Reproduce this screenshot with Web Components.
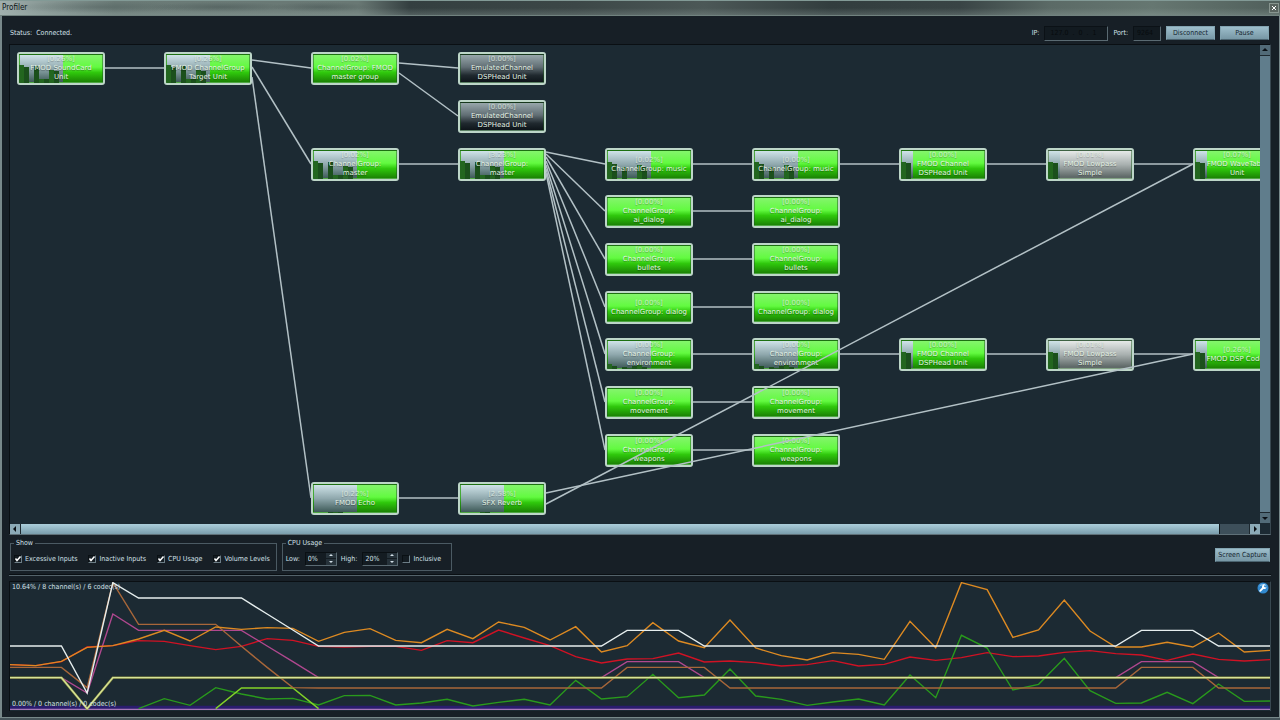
<!DOCTYPE html>
<html lang="en">
<head>
<meta charset="utf-8">
<title>Profiler</title>
<style>
    body {
        margin: 0;
        background: #171f26;
        color: #d3e0e8;
        font: 7px/10px "DejaVu Sans Condensed", "Noto Sans", "Open Sans", sans-serif;
    }
</style>
</head>
<body>
<profiler-window></profiler-window>

<script>
// ---------- data ----------

const COL_STEP = 147;
const NODE_W = 88;

const ROWS = [7, 55, 103, 150, 198, 246, 293, 341, 389, 437];

const FULL = [18, 16, 0, 17, 4, 4, 13, 12];
const MUSIC = [17, 15, 0, 12, 0, 0, 14, 12];
const LOW = [5, 3, 0, 2, 1, 3, 4, 2];
const PAIR = [17, 16];

// col, row, percent, name, kind, level width, meter bars
const NODES = [
    [0, 0, '0.26%', 'FMOD SoundCard<br>Unit', 'active', 43, FULL],
    [1, 0, '0.26%', 'FMOD ChannelGroup<br>Target Unit', 'active', 43, FULL],
    [2, 0, '0.02%', 'ChannelGroup: FMOD<br>master group', 'active', 0, []],
    [3, 0, '0.00%', 'EmulatedChannel<br>DSPHead Unit', 'idle', 0, []],
    [3, 1, '0.00%', 'EmulatedChannel<br>DSPHead Unit', 'idle', 0, []],
    [2, 2, '0.02%', 'ChannelGroup:<br>master', 'active', 43, FULL],
    [3, 2, '3.23%', 'ChannelGroup:<br>master', 'active', 43, FULL],
    [4, 2, '0.02%', 'ChannelGroup: music', 'active', 43, MUSIC],
    [5, 2, '0.00%', 'ChannelGroup: music', 'active', 43, MUSIC],
    [6, 2, '0.00%', 'FMOD Channel<br>DSPHead Unit', 'active', 11, PAIR],
    [7, 2, '0.01%', 'FMOD Lowpass<br>Simple', 'bypass', 11, PAIR],
    [8, 2, '0.07%', 'FMOD WaveTable<br>Unit', 'active', 11, PAIR],
    [4, 3, '0.00%', 'ChannelGroup:<br>ai_dialog', 'active', 0, []],
    [5, 3, '0.00%', 'ChannelGroup:<br>ai_dialog', 'active', 0, []],
    [4, 4, '0.00%', 'ChannelGroup:<br>bullets', 'active', 0, []],
    [5, 4, '0.00%', 'ChannelGroup:<br>bullets', 'active', 0, []],
    [4, 5, '0.00%', 'ChannelGroup: dialog', 'active', 0, []],
    [5, 5, '0.00%', 'ChannelGroup: dialog', 'active', 0, []],
    [4, 6, '0.00%', 'ChannelGroup:<br>environment', 'active', 43, LOW],
    [5, 6, '0.00%', 'ChannelGroup:<br>environment', 'active', 43, LOW],
    [6, 6, '0.00%', 'FMOD Channel<br>DSPHead Unit', 'active', 11, PAIR],
    [7, 6, '0.01%', 'FMOD Lowpass<br>Simple', 'bypass', 11, PAIR],
    [8, 6, '0.26%', 'FMOD DSP Codec', 'active', 11, PAIR],
    [4, 7, '0.00%', 'ChannelGroup:<br>movement', 'active', 0, []],
    [5, 7, '0.00%', 'ChannelGroup:<br>movement', 'active', 0, []],
    [4, 8, '0.00%', 'ChannelGroup:<br>weapons', 'active', 0, []],
    [5, 8, '0.00%', 'ChannelGroup:<br>weapons', 'active', 0, []],
    [2, 9, '0.22%', 'FMOD Echo', 'active', 43, [0, 0, 0, 1, 1, 1]],
    [3, 9, '2.58%', 'SFX Reverb', 'active', 43, [0, 0, 0, 0, 1, 1]]
];

// from col, from row, start offset, to col, to row
const LINKS = [
    [0, 0, 16, 1, 0], [1, 0, 8, 2, 0], [1, 0, 15, 2, 2], [1, 0, 25, 2, 9],
    [2, 0, 11, 3, 0], [2, 0, 21, 3, 1],
    [2, 2, 16, 3, 2],
    [3, 2, 4, 4, 2], [3, 2, 6, 4, 3], [3, 2, 9, 4, 4], [3, 2, 13, 4, 5],
    [3, 2, 17, 4, 6], [3, 2, 21, 4, 7], [3, 2, 25, 4, 8],
    [4, 2, 16, 5, 2], [5, 2, 16, 6, 2], [6, 2, 16, 7, 2], [7, 2, 16, 8, 2],
    [4, 3, 16, 5, 3], [4, 4, 16, 5, 4], [4, 5, 16, 5, 5],
    [4, 6, 16, 5, 6], [5, 6, 16, 6, 6], [6, 6, 16, 7, 6], [7, 6, 16, 8, 6],
    [4, 7, 16, 5, 7], [4, 8, 16, 5, 8],
    [2, 9, 16, 3, 9], [3, 9, 11, 8, 6], [3, 9, 22, 8, 2]
];

const flat = (value, count) => Array(count).fill(value);

// samples on a 0..384 scale, 0 at the top; null is no sample
const SERIES = [
    ['#2a1c6e', 3, flat(376, 50)],
    ['#a878b8', 1, flat(382, 50)],
    ['#d01224', 1, [248, 251, 239, 195, 191, 176, 178, 191, 203, 193, 170, 175, 193, 195, 193, 193, 205, 176, 182, 144, 168, 191, 224, 243, 231, 230, 213, 240, 237, 242, 252, 248, 236, 252, 247, 225, 235, 227, 212, 224, 222, 211, 206, 215, 219, 235, 216, 232, 237, 233]],
    ['#299a1c', 1, [...flat(null, 5), 380, 350, 370, 317, 336, 351, 349, 369, 341, 340, 369, 363, 352, 372, 361, 352, 369, 295, 351, 344, 277, 347, 339, 261, 342, 352, 370, 360, 351, 369, 279, 347, 160, 198, 324, 307, 229, 326, 364, 363, 331, 365, 306, 358, 357]],
    ['#82d228', 1, [...flat(null, 8), 380, 318, 318, 318, 380]],
    ['#b0488f', 1, [287, 287, 287, 333, 96, ...flat(145, 5), 192, 239, ...flat(287, 12), 239, 239, 239, ...flat(287, 17), 239, 239, 239, ...flat(287, 3)]],
    ['#a8673a', 1, [256, 256, 256, 317, 2, ...flat(127, 4), 193, 256, 317, ...flat(318, 12), ...flat(256, 4), ...flat(318, 16), 256, 256, 256, 318, 318, 318]],
    ['#dd8a22', 1, [248, 251, 238, 196, 191, 171, 145, 177, 135, 142, 137, 139, 178, 151, 140, 175, 182, 142, 170, 120, 136, 174, 134, 210, 191, 122, 177, 197, 114, 198, 221, 234, 212, 217, 232, 118, 197, 2, 23, 166, 144, 54, 147, 195, 195, 181, 195, 153, 210, 205]],
    ['#8f9445', 2, [287, 287, 287, 380, ...flat(287, 46)]],
    ['#d6e398', 1, [287, 287, 287, 380, ...flat(287, 46)]],
    ['#e6eeee', 1, [192, 192, 192, 333, 2, ...flat(48, 5), 96, 144, ...flat(192, 12), 145, 145, 145, ...flat(192, 17), 145, 145, 145, ...flat(192, 3)]]
];

// ---------- elements ----------

class TitleBar extends HTMLElement {
    connectedCallback() {
        this.attachShadow({ mode: 'open' }).innerHTML = `
            <style>
                :host {
                    display: flex;
                    align-items: center;
                    justify-content: space-between;
                    height: 16px;
                    padding: 0 1px 0 2px;
                    box-sizing: border-box;
                    border-top: 1px solid #829a96;
                    border-bottom: 1px solid #71827f;
                    color: #0c1417;
                    font-size: 8px;
                    background:
                        radial-gradient(ellipse 90px 6px at 100px 6px, #37454544, transparent),
                        radial-gradient(ellipse 70px 5px at 220px 6px, #26323444, transparent),
                        radial-gradient(ellipse 50px 5px at 320px 6px, #26323444, transparent),
                        linear-gradient(#0000 50%, #a5b7b344),
                        linear-gradient(90deg, #a0afad 0, #8b9b98 3%, #6b7b77 9%, #697874 28%,
                            #343f40 32%, #3c4747 45%, #4c5857 55%, #323d3e 65%, #394445 75%,
                            #5b6a66 82%, #667771 90%, #505f5b 100%);
                }
                button {
                    width: 10px;
                    height: 10px;
                    padding: 0;
                    border: 1px solid #87958f;
                    background: #59645f;
                    display: grid;
                    place-items: center;
                }
                svg { width: 4px; height: 4px; }
            </style>
            <span><slot></slot></span>
            <button aria-label="Close">
                <svg viewBox="0 0 4 4"><path d="M0 0 4 4M4 0 0 4" stroke="#fff"/></svg>
            </button>
        `;
    }
}

class PanelButton extends HTMLElement {
    connectedCallback() {
        this.attachShadow({ mode: 'open' }).innerHTML = `
            <style>
                :host { display: block; }
                button {
                    display: block;
                    min-width: 49px;
                    height: 14px;
                    padding: 0 2px;
                    border: 1px solid #83a4b1;
                    border-bottom-color: #4b6470;
                    background: linear-gradient(#9dbecb, #7797a5);
                    color: #14242e;
                    font: inherit;
                    white-space: nowrap;
                }
            </style>
            <button><slot></slot></button>
        `;
    }
}

class StatusBar extends HTMLElement {
    connectedCallback() {
        this.attachShadow({ mode: 'open' }).innerHTML = `
            <style>
                :host {
                    display: flex;
                    align-items: center;
                    gap: 5px;
                    height: 28px;
                    padding: 6px 2px 0 1px;
                    box-sizing: border-box;
                }
                .status { flex: 1; white-space: pre; }
                input {
                    height: 15px;
                    padding: 0 3px;
                    box-sizing: border-box;
                    border: 1px solid #0b1116;
                    border-right-color: #5a6a72;
                    border-bottom-color: #5a6a72;
                    background: #121a20;
                    color: #070b0e;
                    font: inherit;
                }
                .ip { width: 64px; white-space: pre; }
                .port { width: 28px; }
            </style>
            <span class="status">Status:  Connected.</span>
            <label for="ip">IP:</label>
            <input id="ip" class="ip" value=" 127.0  .  0  .  1">
            <label for="port">Port:</label>
            <input id="port" class="port" value="9264">
            <panel-button>Disconnect</panel-button>
            <panel-button>Pause</panel-button>
        `;
    }
}

class DspNode extends HTMLElement {
    connectedCallback() {
        const kind = this.getAttribute('kind');
        const level = this.getAttribute('level');
        const bars = (this.getAttribute('bars') || '').split(',').map(Number);
        const meter = bars.map((h, i) => {
            const fill = i % 2 ? '#1b501c' : '#23661f';
            return h ? `<rect x="${i * 5}" y="${29 - h}" width="5" height="${h}" fill="${fill}"/>` : '';
        }).join('');

        this.attachShadow({ mode: 'open' }).innerHTML = `
            <style>
                :host {
                    display: grid;
                    place-items: center;
                    width: 88px;
                    height: 33px;
                    box-sizing: border-box;
                    border: 2px solid #bdd6c8;
                    border-radius: 3px;
                    overflow: hidden;
                    color: #e4f2e4;
                    font: 7px/9px "DejaVu Sans", sans-serif;
                    text-align: center;
                    text-shadow: 0 1px 1px #0006;
                }
                .body, svg, .text { grid-area: 1 / 1; }
                .body {
                    width: 100%;
                    height: 100%;
                    box-sizing: border-box;
                    border: 1px solid #1e5a1d80;
                    background:
                        linear-gradient(#cfe3e8, #8fa8ad 50%, #3e5a58) 0 0 / ${level}px 100% no-repeat,
                        var(--base);
                }
                .active { --base: linear-gradient(#84f56c, #62fa40 45%, #2fc80c 65%, #1b8304); }
                .idle { --base: linear-gradient(#98a7ab, #616e74 45%, #20292f 75%, #0e151a); }
                .bypass { --base: linear-gradient(#e6e9e8, #a9b1b0 50%, #606a69 95%); }
                svg { width: 84px; height: 29px; }
                .text { width: 84px; white-space: nowrap; }
                .percent { opacity: 0.75; }
            </style>
            <div class="body ${kind}"></div>
            <svg viewBox="0 0 84 29">${meter}</svg>
            <div class="text">
                <div class="percent">[${this.getAttribute('percent')}]</div>
                <slot></slot>
            </div>
        `;
    }
}

class ScrollStrip extends HTMLElement {
    connectedCallback() {
        this.attachShadow({ mode: 'open' }).innerHTML = `
            <style>
                :host { display: flex; background: #1d282f; gap: 1px; }
                :host([direction="vertical"]) { flex-direction: column; width: 10px; }
                :host([direction="horizontal"]) { height: 10px; }
                .track { flex: 1; display: flex; background: #3d4f5a; }
                .thumb { flex: 1; background: #607d8c; }
                :host([direction="horizontal"]) .thumb {
                    flex: 0 1 calc(100% - 30px);
                    background: linear-gradient(#abcedb, #7a9dac);
                    border-right: 1px solid #10181d;
                }
                button {
                    width: 10px;
                    height: 10px;
                    padding: 0;
                    border: 0;
                    background: #526b78;
                    display: grid;
                    place-items: center;
                }
                :host([direction="horizontal"]) button { background: #8baab7; }
                svg { width: 6px; height: 6px; fill: #0a1015; }
            </style>
            <button aria-label="Back"><svg viewBox="0 0 6 6"><path class="back"/></svg></button>
            <div class="track"><div class="thumb"></div></div>
            <button aria-label="Forward"><svg viewBox="0 0 6 6"><path class="next"/></svg></button>
        `;
        const vertical = this.getAttribute('direction') === 'vertical';
        this.shadowRoot.querySelector('.back').setAttribute('d', vertical ? 'M0 4 3 1 6 4Z' : 'M4 0 1 3 4 6Z');
        this.shadowRoot.querySelector('.next').setAttribute('d', vertical ? 'M0 2 3 5 6 2Z' : 'M2 0 5 3 2 6Z');
    }
}

class SignalGraph extends HTMLElement {
    connectedCallback() {
        const nodes = NODES.map(([col, row, percent, name, kind, level, bars]) => `
            <dsp-node style="left: ${7 + col * COL_STEP}px; top: ${ROWS[row]}px"
                percent="${percent}" kind="${kind}" level="${level}" bars="${bars}">${name}</dsp-node>
        `).join('');
        const links = LINKS.map(([c1, r1, dy, c2, r2]) => {
            const x1 = 7 + c1 * COL_STEP + NODE_W;
            const x2 = 7 + c2 * COL_STEP;
            return `<path d="M${x1} ${ROWS[r1] + dy}L${x2} ${ROWS[r2] + 16}"/>`;
        }).join('');

        this.attachShadow({ mode: 'open' }).innerHTML = `
            <style>
                :host {
                    display: grid;
                    grid-template: 1fr 11px / 1fr 10px;
                    border: 1px solid #0a0f13;
                    border-right-color: #394750;
                    border-bottom-color: #5f7078;
                    background: #1c2a33;
                }
                .canvas { position: relative; overflow: hidden; }
                dsp-node { position: absolute; }
                .links {
                    position: absolute;
                    width: 100%;
                    height: 100%;
                    fill: none;
                    stroke: #b3c1c6;
                    stroke-width: 1.5;
                }
                scroll-strip[direction="horizontal"] { align-self: end; }
            </style>
            <div class="canvas">
                ${nodes}
                <svg class="links">${links}</svg>
            </div>
            <scroll-strip direction="vertical"></scroll-strip>
            <scroll-strip direction="horizontal"></scroll-strip>
        `;
    }
}

class GroupBox extends HTMLElement {
    connectedCallback() {
        this.attachShadow({ mode: 'open' }).innerHTML = `
            <style>
                :host { display: block; }
                fieldset {
                    display: flex;
                    height: 32px;
                    margin: 0;
                    padding: 0 var(--end, 6px) 0 3px;
                    box-sizing: border-box;
                    border: 1px solid #4b5a63;
                }
                legend { padding: 0 2px; line-height: 8px; }
                .row { display: flex; align-items: center; gap: var(--gap, 11px); }
            </style>
            <fieldset>
                <legend>${this.getAttribute('label')}</legend>
                <div class="row"><slot></slot></div>
            </fieldset>
        `;
    }
}

class CheckOption extends HTMLElement {
    connectedCallback() {
        const checked = this.hasAttribute('checked') ? 'checked' : '';
        this.attachShadow({ mode: 'open' }).innerHTML = `
            <style>
                :host { display: block; }
                label { display: flex; align-items: center; gap: 3px; white-space: nowrap; }
                input {
                    appearance: none;
                    width: 8px;
                    height: 8px;
                    margin: 0;
                    box-sizing: border-box;
                    border: 1px solid #0a1014;
                    border-right-color: #6c7d86;
                    border-bottom-color: #6c7d86;
                    background: #141c22;
                }
                .box { display: grid; }
                .box > * { grid-area: 1 / 1; }
                svg { width: 8px; height: 8px; fill: none; stroke: #fff; stroke-width: 1.5; pointer-events: none; }
                input:not(:checked) + svg { visibility: hidden; }
            </style>
            <label>
                <span class="box">
                    <input type="checkbox" ${checked}>
                    <svg viewBox="0 0 8 8"><path d="M1.5 3.5 3 5.5 6.5 1.5"/></svg>
                </span>
                <slot></slot>
            </label>
        `;
    }
}

class SpinField extends HTMLElement {
    connectedCallback() {
        const width = this.getAttribute('width');
        this.attachShadow({ mode: 'open' }).innerHTML = `
            <style>
                :host { display: flex; align-items: center; gap: 5px; }
                .field {
                    display: flex;
                    width: ${width}px;
                    height: 14px;
                    box-sizing: border-box;
                    border: 1px solid #0a1014;
                    border-right-color: #5a6a72;
                    border-bottom-color: #5a6a72;
                    background: #141c22;
                }
                input {
                    flex: 1;
                    min-width: 0;
                    padding: 0 0 0 2px;
                    border: 0;
                    background: none;
                    color: inherit;
                    font: inherit;
                }
                .arrows { display: grid; width: 10px; gap: 1px; }
                button { padding: 0; border: 0; background: #26323a; display: grid; place-items: center; }
                svg { width: 4px; height: 2px; fill: #d3e0e8; }
            </style>
            <label for="value">${this.getAttribute('label')}</label>
            <div class="field">
                <input id="value" value="${this.getAttribute('value')}">
                <div class="arrows">
                    <button aria-label="Increase"><svg viewBox="0 0 4 2"><path d="M0 2 2 0 4 2Z"/></svg></button>
                    <button aria-label="Decrease"><svg viewBox="0 0 4 2"><path d="M0 0 2 2 4 0Z"/></svg></button>
                </div>
            </div>
        `;
    }
}

class UsageChart extends HTMLElement {
    connectedCallback() {
        const lines = SERIES.map(([color, weight, values]) => {
            const points = values.map((v, i) => v === null ? '' : `${i},${v}`).join(' ');
            return `<polyline points="${points}" stroke="${color}" stroke-width="${weight + 0.4}"/>`;
        }).join('');

        this.attachShadow({ mode: 'open' }).innerHTML = `
            <style>
                :host {
                    display: grid;
                    height: 130px;
                    box-sizing: border-box;
                    border: 1px solid #0a0f13;
                    border-right-color: #394750;
                    border-bottom: 0;
                    background: #1c2a33;
                }
                .plot, .labels { grid-area: 1 / 1; }
                .plot { width: 100%; height: 128px; fill: none; }
                polyline { vector-effect: non-scaling-stroke; }
                .labels {
                    display: flex;
                    flex-direction: column;
                    justify-content: space-between;
                    padding: 0 1px 2px 2px;
                }
                .top { display: flex; justify-content: space-between; }
                button { width: 12px; height: 12px; padding: 0; border: 0; background: none; }
                button svg { display: block; width: 12px; height: 12px; }
            </style>
            <svg class="plot" viewBox="0 0 49 384" preserveAspectRatio="none">${lines}</svg>
            <div class="labels">
                <div class="top">
                    <span>10.64% / 8 channel(s) / 6 codec(s)</span>
                    <button aria-label="Settings">
                        <svg viewBox="0 0 12 12">
                            <circle cx="6" cy="6" r="5.5" fill="#3189cf"/>
                            <path d="M2 4.5a4.5 4.5 0 0 1 8 0Q6 2.5 2 4.5Z" fill="#8cc4ee"/>
                            <path d="M3.2 8.8 6.5 5.5" stroke="#fff" stroke-width="1.8" stroke-linecap="round"/>
                            <path d="M8.6 2.7A2.3 2.3 0 1 0 9.6 5.2L8 5.6 6.9 4.4 7.2 3.2Z" fill="#fff"/>
                        </svg>
                    </button>
                </div>
                <span>0.00% / 0 channel(s) / 0 codec(s)</span>
            </div>
        `;
    }
}

class ProfilerWindow extends HTMLElement {
    connectedCallback() {
        this.attachShadow({ mode: 'open' }).innerHTML = `
            <style>
                :host {
                    display: flex;
                    flex-direction: column;
                    min-height: 100vh;
                    box-sizing: border-box;
                    border-bottom: 2px solid #46545a;
                }
                main {
                    flex: 1;
                    display: flex;
                    flex-direction: column;
                    padding: 0 8px 6px 7px;
                    border: solid #78888a;
                    border-width: 0 1px 1px 2px;
                }
                signal-graph { flex: 1; min-height: 480px; }
                .controls {
                    display: flex;
                    align-items: center;
                    gap: 5px;
                    padding: 4px 1px 3px 1px;
                }
                .controls panel-button { margin-left: auto; }
                .cpu { --gap: 4px; --end: 10px; }
                hr {
                    width: 100%;
                    height: 2px;
                    margin: 0 0 5px;
                    border: 0;
                    background: linear-gradient(#0a0f13 50%, #53626a 50%);
                }
            </style>
            <title-bar>Profiler</title-bar>
            <main>
                <status-bar></status-bar>
                <signal-graph></signal-graph>
                <div class="controls">
                    <group-box label="Show">
                        <check-option checked>Excessive Inputs</check-option>
                        <check-option checked>Inactive Inputs</check-option>
                        <check-option checked>CPU Usage</check-option>
                        <check-option checked>Volume Levels</check-option>
                    </group-box>
                    <group-box class="cpu" label="CPU Usage">
                        <spin-field label="Low:" value="0%" width="32"></spin-field>
                        <spin-field label="High:" value="20%" width="36"></spin-field>
                        <check-option>Inclusive</check-option>
                    </group-box>
                    <panel-button>Screen Capture</panel-button>
                </div>
                <hr>
                <usage-chart></usage-chart>
            </main>
        `;
    }
}

customElements.define('title-bar', TitleBar);
customElements.define('panel-button', PanelButton);
customElements.define('status-bar', StatusBar);
customElements.define('dsp-node', DspNode);
customElements.define('scroll-strip', ScrollStrip);
customElements.define('signal-graph', SignalGraph);
customElements.define('group-box', GroupBox);
customElements.define('check-option', CheckOption);
customElements.define('spin-field', SpinField);
customElements.define('usage-chart', UsageChart);
customElements.define('profiler-window', ProfilerWindow);
</script>
</body>
</html>
